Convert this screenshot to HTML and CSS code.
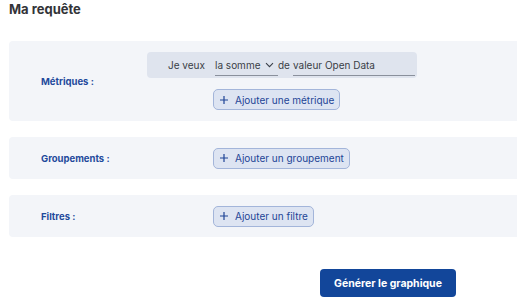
FILE: index.html
```html
<!DOCTYPE html>
<html lang="fr">
<head>
<meta charset="utf-8">
<link rel="stylesheet" href="styles.css">
</head>
<body>
<h2 class="title">Ma requête</h2>

<section class="card card-metrics">
  <div class="label">Métriques :</div>
  <div class="content">
    <div class="metric-row">
      <span class="want">Je veux</span>
      <span class="select">la somme
        <svg class="chev" width="9" height="6" viewBox="0 0 9 6"><path d="M1 1.2l3.5 3.5 3.5-3.5" fill="none" stroke="#3a3f4a" stroke-width="1.1"/></svg>
      </span>
      <span class="de">de</span>
      <span class="field">valeur Open Data</span>
    </div>
    <button class="add-btn"><svg class="plus" width="8" height="8" viewBox="0 0 8 8"><path d="M4 0v8M0 4h8" stroke="#1e4496" stroke-width="1.2"/></svg>Ajouter une métrique</button>
  </div>
</section>

<section class="card">
  <div class="label">Groupements :</div>
  <div class="content">
    <button class="add-btn"><svg class="plus" width="8" height="8" viewBox="0 0 8 8"><path d="M4 0v8M0 4h8" stroke="#1e4496" stroke-width="1.2"/></svg>Ajouter un groupement</button>
  </div>
</section>

<section class="card">
  <div class="label">Filtres :</div>
  <div class="content">
    <button class="add-btn"><svg class="plus" width="8" height="8" viewBox="0 0 8 8"><path d="M4 0v8M0 4h8" stroke="#1e4496" stroke-width="1.2"/></svg>Ajouter un filtre</button>
  </div>
</section>

<div class="actions">
  <button class="generate">Générer le graphique</button>
</div>
</body>
</html>
```

FILE: styles.css
```css
* { box-sizing: border-box; }
html, body { margin: 0; padding: 0; background: #fff; }
body {
  font-family: Inter, "Open Sans", sans-serif;
  padding: 0 0 0 9px;
  width: 517px;
  overflow: hidden;
  white-space: nowrap;
}
.title {
  margin: 0;
  padding-top: 1px;
  height: 41px;
  font-size: 13px;
  font-weight: 700;
  color: #333438;
}
.card {
  display: flex;
  align-items: center;
  background: #f3f5f9;
  border-radius: 4px 0 0 4px;
  padding: 10px 0 10px 32px;
  margin-bottom: 16px;
  min-height: 42px;
}
.card-metrics { padding: 11px 0 11px 32px; }
.label {
  width: 172px;
  flex: none;
  font-size: 9.5px;
  font-weight: 700;
  color: #1f4a9c;
}
.card-metrics .label { width: 106px; }
.content {
  display: flex;
  flex-direction: column;
  align-items: flex-start;
}
.metric-row {
  display: flex;
  align-items: center;
  width: 270px;
  height: 26px;
  background: #dfe4ee;
  border-radius: 4px;
  font-size: 10px;
  color: #3a3e46;
  margin-bottom: 11px;
}
.want {
  width: 58px;
  text-align: right;
  margin-right: 10px;
}
.select {
  display: flex;
  align-items: center;
  justify-content: space-between;
  width: 63px;
  height: 21px;
  padding-right: 4px;
  border-bottom: 1px solid #8a909c;
}
.chev { margin-top: 1px; }
.de { padding: 0 3px 0 0; }
.field {
  width: 122px;
  height: 21px;
  display: flex;
  align-items: center;
  border-bottom: 1px solid #8a909c;
}
.card-metrics .add-btn { margin-left: 66px; }
.add-btn {
  display: flex;
  align-items: center;
  height: 21px;
  padding: 0 5px 0 6px;
  background: #dde4f2;
  border: 1px solid #a3b5da;
  border-radius: 5px;
  font-family: inherit;
  font-size: 10px;
  color: #1e4496;
  cursor: pointer;
}
.plus {
  margin-right: 7px;
  flex: none;
}
.actions {
  display: flex;
  padding: 16px 0 0 311px;
}
.generate {
  width: 136px;
  height: 28px;
  background: #12469a;
  border: none;
  border-radius: 4px;
  color: #fff;
  font-family: inherit;
  font-size: 10.5px;
  font-weight: 700;
}
```
